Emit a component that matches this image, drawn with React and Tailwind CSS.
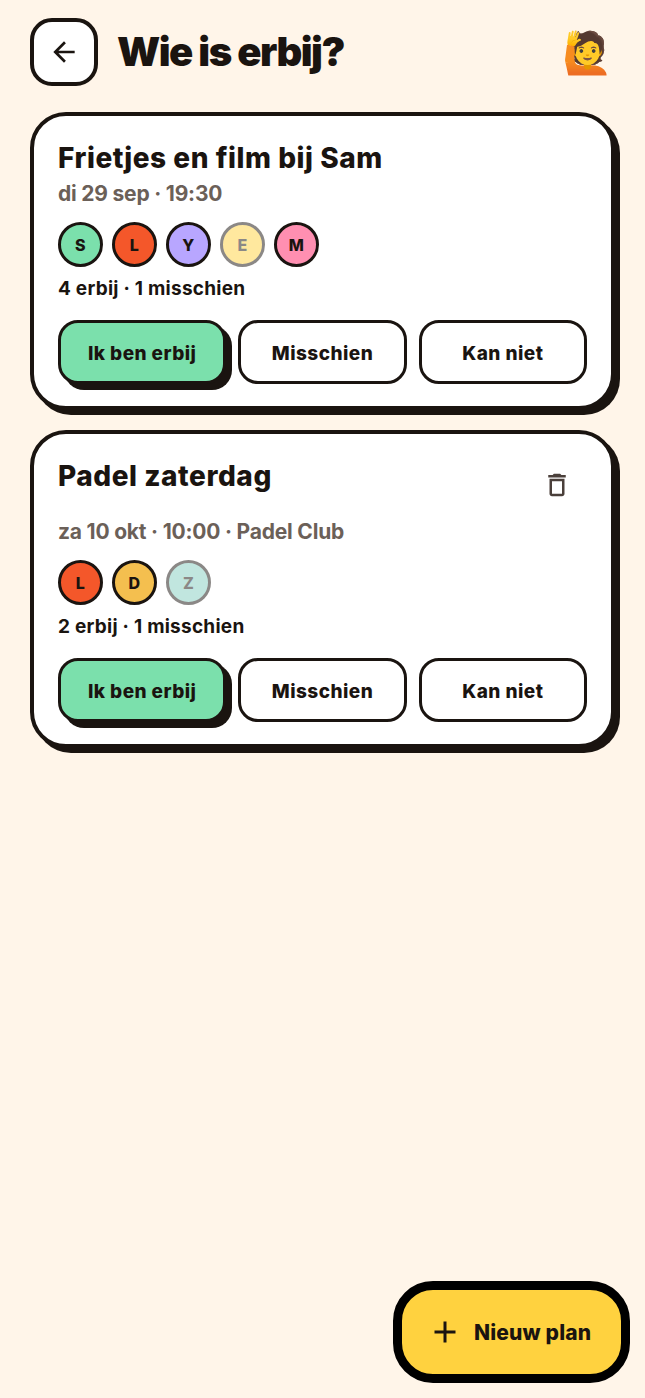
const INK = "#1a1410";

function Avatar({ letter, bg, faded }) {
  return (
    <div
      className={`w-[45px] h-[45px] rounded-full border-[3px] border-[#1a1410] flex items-center justify-center text-[16px] font-extrabold tracking-[0.3px] text-[#1a1410] ${faded ? "opacity-50" : ""} ${bg}`}
    >
      {letter}
    </div>
  );
}

function ChoiceButtons() {
  return (
    <div className="grid grid-cols-3 gap-3 mt-[17px] text-[19px] font-extrabold tracking-[0.45px] text-[#1a1410]">
      <button className="h-[64px] pt-[4px] rounded-[20px] border-[3px] border-[#1a1410] bg-[#7BE0AC] shadow-[6px_6px_0_#1a1410]">
        Ik ben erbij
      </button>
      <button className="h-[64px] pt-[4px] rounded-[20px] border-[3px] border-[#1a1410] bg-white">
        Misschien
      </button>
      <button className="h-[64px] pt-[4px] rounded-[20px] border-[3px] border-[#1a1410] bg-white">
        Kan niet
      </button>
    </div>
  );
}

function Card({ title, meta, avatars, counts, trash }) {
  return (
    <div className="rounded-[36px] border-4 border-[#1a1410] bg-white shadow-[5px_5px_0_#1a1410] px-6 pt-[20px] pb-[22px]">
      <div className={`flex items-start justify-between ${trash ? "h-[62px]" : "h-[42px]"}`}>
        <h2 className="text-[28px] leading-[44px] font-extrabold tracking-[0.55px] text-[#1a1410]">{title}</h2>
        {trash && (
          <svg width="30" height="30" viewBox="0 0 24 24" fill="#4a3f3a" className="mt-[16px] mr-[15px]">
            <path d="M6 19c0 1.1.9 2 2 2h8c1.1 0 2-.9 2-2V7H6v12zM8 9h8v10H8V9zm7.5-5-1-1h-5l-1 1H5v2h14V4z" />
          </svg>
        )}
      </div>
      <p className="text-[21px] leading-[32px] font-bold tracking-[-0.2px] text-[#6b6058]">{meta}</p>
      <div className="flex gap-[9px] mt-[12px]">
        {avatars.map((a) => (
          <Avatar key={a.letter} {...a} />
        ))}
      </div>
      <p className="text-[19px] leading-[28px] font-bold tracking-[0.25px] text-[#1a1410] mt-[8px]">{counts}</p>
      <ChoiceButtons />
    </div>
  );
}

export default function App() {
  return (
    <div
      className="relative h-[1398px] w-full overflow-hidden bg-[#FFF5E9] px-[30px] pt-[18px]"
      style={{ fontFamily: "Inter, 'Noto Color Emoji', sans-serif", color: INK }}
    >
      <header className="flex items-center h-[68px]">
        <button className="w-[68px] h-[68px] rounded-[22px] border-4 border-[#1a1410] bg-white flex items-center justify-center">
          <svg width="32" height="32" viewBox="0 0 24 24" fill="#1a1410">
            <path d="M20 11H7.83l5.59-5.59L12 4l-8 8 8 8 1.41-1.41L7.83 13H20v-2z" />
          </svg>
        </button>
        <h1 className="ml-[19px] text-[40px] font-black tracking-[-1.5px] text-[#1a1410]">Wie is erbij?</h1>
        <span className="ml-auto mr-[2px] text-[41px] leading-none">🙋</span>
      </header>

      <main className="flex flex-col gap-5 mt-[26px]">
        <Card
          title="Frietjes en film bij Sam"
          meta="di 29 sep · 19:30"
          counts="4 erbij · 1 misschien"
          avatars={[
            { letter: "S", bg: "bg-[#7BE0AC]" },
            { letter: "L", bg: "bg-[#F4572A]" },
            { letter: "Y", bg: "bg-[#B8A6FF]" },
            { letter: "E", bg: "bg-[#FFD23F]", faded: true },
            { letter: "M", bg: "bg-[#FF8FB1]" },
          ]}
        />
        <Card
          trash
          title="Padel zaterdag"
          meta="za 10 okt · 10:00 · Padel Club"
          counts="2 erbij · 1 misschien"
          avatars={[
            { letter: "L", bg: "bg-[#F4572A]" },
            { letter: "D", bg: "bg-[#F4BF4F]" },
            { letter: "Z", bg: "bg-[#85CFC1]", faded: true },
          ]}
        />
      </main>

      <button className="absolute right-[15px] bottom-[15px] w-[237px] h-[102px] rounded-[40px] border-[9px] border-black bg-[#FFD23F] flex items-center justify-start pl-[25px] gap-[11px] text-[21px] font-extrabold tracking-[0.15px] text-[#1a1410]">
        <svg width="36" height="36" viewBox="0 0 24 24" fill="#1a1410">
          <path d="M19 13h-6v6h-2v-6H5v-2h6V5h2v6h6v2z" />
        </svg>
        <span className="pt-[2px]">Nieuw plan</span>
      </button>
    </div>
  );
}
